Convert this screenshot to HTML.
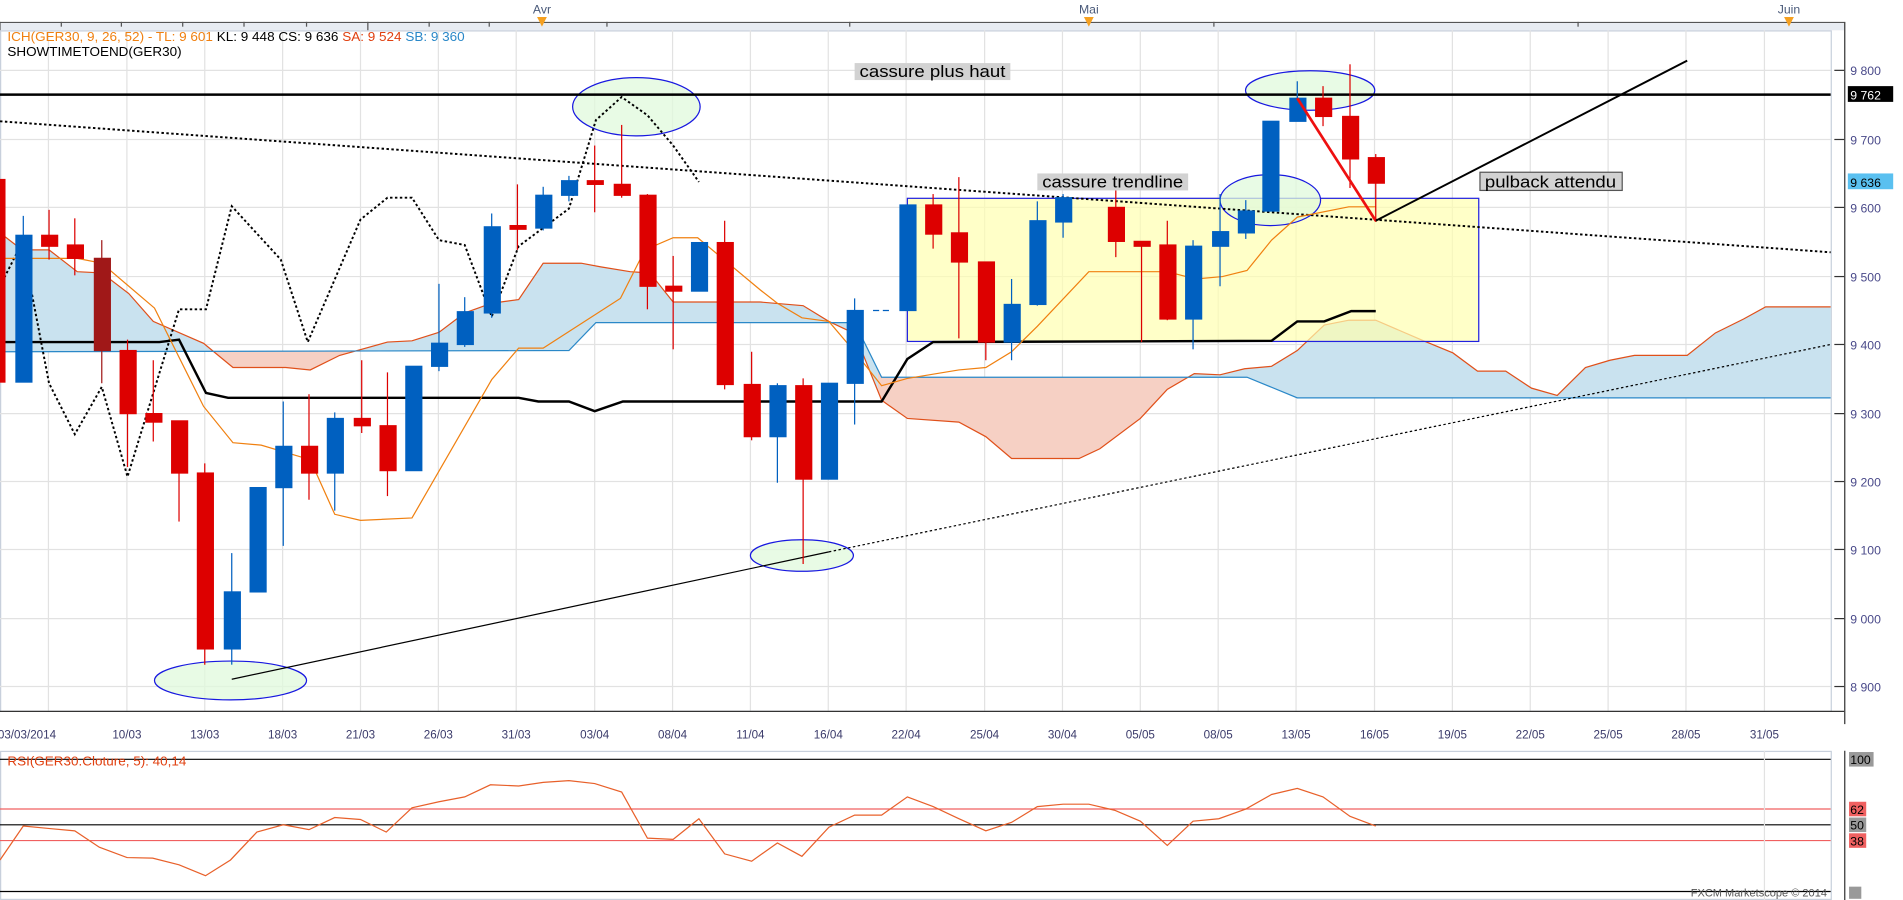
<!DOCTYPE html>
<html><head><meta charset="utf-8"><style>
html,body{margin:0;padding:0;background:#fff;overflow:hidden}
svg{display:block}
text{font-family:"Liberation Sans","DejaVu Sans",sans-serif}
</style></head><body>
<svg width="1903" height="900" viewBox="0 0 1552 742" preserveAspectRatio="none" xmlns="http://www.w3.org/2000/svg">
<defs>
<clipPath id="cb1"><rect x="0" y="0" width="175" height="600"/><rect x="290" y="0" width="426" height="600"/><rect x="970" y="0" width="530" height="600"/></clipPath>
<clipPath id="cr1"><rect x="175" y="0" width="115" height="600"/><rect x="716" y="0" width="254" height="600"/></clipPath>
</defs>
<rect width="1552" height="742" fill="#fff"/>
<!-- top time axis -->
<rect x="0" y="19" width="1504" height="6" fill="#e8ecf2"/>
<line x1="0" y1="18.5" x2="1504" y2="18.5" stroke="#555"/>
<g stroke="#555">
<line x1="0" y1="18" x2="0" y2="25"/><line x1="50" y1="18" x2="50" y2="22"/><line x1="99" y1="18" x2="99" y2="22"/><line x1="149" y1="18" x2="149" y2="22"/><line x1="199" y1="18" x2="199" y2="22"/><line x1="250" y1="18" x2="250" y2="22"/><line x1="300" y1="18" x2="300" y2="25"/><line x1="350" y1="18" x2="350" y2="22"/><line x1="399" y1="18" x2="399" y2="22"/><line x1="495" y1="18" x2="495" y2="22"/><line x1="693" y1="18" x2="693" y2="22"/><line x1="990" y1="18" x2="990" y2="22"/><line x1="1287" y1="18" x2="1287" y2="22"/>
</g>
<text x="442" y="11" font-size="10" fill="#4a5a7a" text-anchor="middle">Avr</text>
<text x="888" y="11" font-size="10" fill="#4a5a7a" text-anchor="middle">Mai</text>
<text x="1459" y="11" font-size="10" fill="#4a5a7a" text-anchor="middle">Juin</text>
<path d="M438 14h8l-4 8z M884 14h8l-4 8z M1455 14h8l-4 8z" fill="#f5a020"/>
<!-- chart frame -->
<rect x="0.5" y="25.5" width="1493" height="561" fill="#fff" stroke="#c8d0dc"/>
<!-- grid -->
<g stroke="#e2e2e2" stroke-width="1">
<line x1="0" y1="58" x2="1493" y2="58"/><line x1="0" y1="115" x2="1493" y2="115"/><line x1="0" y1="171" x2="1493" y2="171"/><line x1="0" y1="228" x2="1493" y2="228"/><line x1="0" y1="284" x2="1493" y2="284"/><line x1="0" y1="341" x2="1493" y2="341"/><line x1="0" y1="397" x2="1493" y2="397"/><line x1="0" y1="453" x2="1493" y2="453"/><line x1="0" y1="510" x2="1493" y2="510"/><line x1="0" y1="566" x2="1493" y2="566"/>
<line x1="39.5" y1="25" x2="39.5" y2="586"/><line x1="103.5" y1="25" x2="103.5" y2="586"/><line x1="167" y1="25" x2="167" y2="586"/><line x1="230.5" y1="25" x2="230.5" y2="586"/><line x1="294" y1="25" x2="294" y2="586"/><line x1="357.5" y1="25" x2="357.5" y2="586"/><line x1="421" y1="25" x2="421" y2="586"/><line x1="485" y1="25" x2="485" y2="586"/><line x1="548.5" y1="25" x2="548.5" y2="586"/><line x1="612" y1="25" x2="612" y2="586"/><line x1="675.5" y1="25" x2="675.5" y2="586"/><line x1="739" y1="25" x2="739" y2="586"/><line x1="803" y1="25" x2="803" y2="586"/><line x1="866.5" y1="25" x2="866.5" y2="586"/><line x1="930" y1="25" x2="930" y2="586"/><line x1="993.5" y1="25" x2="993.5" y2="586"/><line x1="1057" y1="25" x2="1057" y2="586"/><line x1="1121" y1="25" x2="1121" y2="586"/><line x1="1184.5" y1="25" x2="1184.5" y2="586"/><line x1="1248" y1="25" x2="1248" y2="586"/><line x1="1311.5" y1="25" x2="1311.5" y2="586"/><line x1="1375" y1="25" x2="1375" y2="586"/><line x1="1439" y1="25" x2="1439" y2="586"/>
</g>
<!-- cloud -->
<polygon clip-path="url(#cb1)" fill="#c9e2ef" points="0,192 18,206 40,206 63,224 83,225 105,242 125,265 166,283 190,303 233,303 253,305 277,293 316,282 336,281 358,274 379,258 401,250 423,247 443,217 474,217 490,220 514,224 530,225 549,249 620,249 655,252 676,265 697,275 719,330 740,345 782,348 804,360 825,378 880,378 897,370 930,345 952,321 974,308 995,309 1015,304 1037,302 1058,289 1080,268 1100,264 1122,264 1161,281 1185,291 1205,306 1228,306 1249,320 1270,326 1293,303 1313,297 1333,293 1376,293 1399,274.5 1422,263 1440,253 1493,253 1493,328 1058,328 1017,311 719,311 697,266 486,266 464,289 0,290"/>
<polygon clip-path="url(#cr1)" fill="#f6d0c4" points="0,192 18,206 40,206 63,224 83,225 105,242 125,265 166,283 190,303 233,303 253,305 277,293 316,282 336,281 358,274 379,258 401,250 423,247 443,217 474,217 490,220 514,224 530,225 549,249 620,249 655,252 676,265 697,275 719,330 740,345 782,348 804,360 825,378 880,378 897,370 930,345 952,321 974,308 995,309 1015,304 1037,302 1058,289 1080,268 1100,264 1122,264 1161,281 1185,291 1205,306 1228,306 1249,320 1270,326 1293,303 1313,297 1333,293 1376,293 1399,274.5 1422,263 1440,253 1493,253 1493,328 1058,328 1017,311 719,311 697,266 486,266 464,289 0,290"/>
<polyline fill="none" stroke="#e0501a" stroke-width="1" points="0,192 18,206 40,206 63,224 83,225 105,242 125,265 166,283 190,303 233,303 253,305 277,293 316,282 336,281 358,274 379,258 401,250 423,247 443,217 474,217 490,220 514,224 530,225 549,249 620,249 655,252 676,265 697,275 719,330 740,345 782,348 804,360 825,378 880,378 897,370 930,345 952,321 974,308 995,309 1015,304 1037,302 1058,289 1080,268 1100,264 1122,264 1161,281 1185,291 1205,306 1228,306 1249,320 1270,326 1293,303 1313,297 1333,293 1376,293 1399,274.5 1422,263 1440,253 1493,253"/>
<polyline fill="none" stroke="#2a88c8" stroke-width="1" points="0,290 464,289 486,266 697,266 719,311 1017,311 1058,328 1493,328"/>
<!-- yellow box -->
<rect x="740" y="163.5" width="466" height="118" fill="#ffffb0" fill-opacity="0.7" stroke="#2020e0" stroke-width="1"/>
<!-- ellipses -->
<g fill="#e0fadc" fill-opacity="0.75" stroke="#1818e0" stroke-width="1">
<ellipse cx="519" cy="88" rx="52" ry="24"/>
<ellipse cx="1068.5" cy="74.6" rx="52.7" ry="16.3"/>
<ellipse cx="1036" cy="165" rx="41" ry="21"/>
<ellipse cx="654" cy="458" rx="42" ry="13"/>
<ellipse cx="188" cy="561" rx="62" ry="16"/>
</g>
<line x1="0" y1="78" x2="1493" y2="78" stroke="#000" stroke-width="2"/>
<line x1="0" y1="100" x2="1493" y2="208" stroke="#000" stroke-width="1.6" stroke-dasharray="2,2"/>
<line x1="189" y1="560" x2="676" y2="455" stroke="#000" stroke-width="1"/>
<line x1="676" y1="455" x2="1493" y2="284" stroke="#000" stroke-width="1" stroke-dasharray="2,2"/>
<polyline fill="none" stroke="#000" stroke-width="1.6" stroke-dasharray="2,2" points="0,236 18,200 40,316 61,358 83,319 104,393 146,255 168,255 189,170 229,214 251,282 294,181 316,163 336,163 358,198 379,202 401,261 423,203 464,172 486,99 507,80 528,95 549,120 570,150"/>
<polyline fill="none" stroke="#000" stroke-width="2" points="0,282 130,282 146,280 168,324 186,328 423,328 439,331 464,331 485,339 508,331 719,331 740,296 761,282 1037,281 1058,265 1080,265 1102,256.5 1122,256.5"/>
<polyline fill="none" stroke="#f08010" stroke-width="1" points="0,213 63,213 83,217 126,254 166,335 190,365 213,367 253,379 273,424 294,429 336,427 401,313 423,287 443,287 506,246 526,206 549,196 569,196 620,239 634,250 654,262 676,265 697,290 719,318 740,312 782,305 804,303 825,290 846,269 888,224 952,224 975,230 997,228 1017,223 1037,198 1058,179 1100,170.5 1122,170.5"/>
<!-- candles -->
<g stroke-width="1">
<g stroke="#dd0000" fill="#dd0000">
<line x1="-2" y1="140" x2="-2" y2="318"/><rect x="-8" y="148" width="12" height="167"/>
<line x1="40" y1="173" x2="40" y2="214"/><rect x="34" y="194" width="13" height="9"/>
<line x1="61" y1="180" x2="61" y2="227"/><rect x="55" y="202" width="13" height="11"/>
<line x1="104" y1="280" x2="104" y2="385"/><rect x="98" y="289" width="13" height="52"/>
<line x1="125" y1="297" x2="125" y2="364"/><rect x="119" y="341" width="13" height="7"/>
<line x1="146" y1="347" x2="146" y2="430"/><rect x="140" y="347" width="13" height="43"/>
<line x1="167" y1="382" x2="167" y2="548"/><rect x="161" y="390" width="13" height="145"/>
<line x1="252" y1="325" x2="252" y2="412"/><rect x="246" y="368" width="13" height="22"/>
<line x1="295" y1="297" x2="295" y2="357"/><rect x="289" y="345" width="13" height="6"/>
<line x1="316" y1="307" x2="316" y2="409"/><rect x="310" y="351" width="13" height="37"/>
<line x1="422" y1="152" x2="422" y2="206"/><rect x="416" y="186" width="13" height="3"/>
<line x1="485" y1="120" x2="485" y2="175"/><rect x="479" y="149" width="13" height="3"/>
<line x1="507" y1="103" x2="507" y2="163"/><rect x="501" y="152" width="13" height="9"/>
<line x1="528" y1="160" x2="528" y2="255"/><rect x="522" y="161" width="13" height="75"/>
<line x1="549" y1="211" x2="549" y2="288"/><rect x="543" y="236" width="13" height="4"/>
<line x1="591" y1="182" x2="591" y2="321"/><rect x="585" y="200" width="13" height="117"/>
<line x1="613" y1="290" x2="613" y2="363"/><rect x="607" y="317" width="13" height="43"/>
<line x1="655" y1="312" x2="655" y2="465"/><rect x="649" y="318" width="13" height="77"/>
<line x1="761" y1="160" x2="761" y2="205"/><rect x="755" y="169" width="13" height="24"/>
<line x1="782" y1="146" x2="782" y2="279"/><rect x="776" y="192" width="13" height="24"/>
<line x1="804" y1="216" x2="804" y2="297"/><rect x="798" y="216" width="13" height="66"/>
<line x1="910" y1="157" x2="910" y2="212"/><rect x="904" y="171" width="13" height="28"/>
<line x1="931" y1="199" x2="931" y2="282"/><rect x="925" y="199" width="13" height="4"/>
<line x1="952" y1="182" x2="952" y2="264"/><rect x="946" y="202" width="13" height="61"/>
<line x1="1079" y1="71" x2="1079" y2="104"/><rect x="1073" y="81" width="13" height="15"/>
<line x1="1101" y1="53" x2="1101" y2="155"/><rect x="1095" y="96" width="13" height="35"/>
<line x1="1122" y1="127" x2="1122" y2="183"/><rect x="1116" y="130" width="13" height="21"/>
</g>
<g stroke="#a01818" fill="#a01818"><line x1="83" y1="198" x2="83" y2="316"/><rect x="77" y="213" width="13" height="76"/></g>
<g stroke="#0060c0" fill="#0060c0">
<line x1="19" y1="178" x2="19" y2="315"/><rect x="13" y="194" width="13" height="121"/>
<line x1="189" y1="456" x2="189" y2="548"/><rect x="183" y="488" width="13" height="47"/>
<rect x="204" y="402" width="13" height="86"/>
<line x1="231" y1="331" x2="231" y2="450"/><rect x="225" y="368" width="13" height="34"/>
<line x1="273" y1="340" x2="273" y2="421"/><rect x="267" y="345" width="13" height="45"/>
<rect x="331" y="302" width="13" height="86"/>
<line x1="358" y1="234" x2="358" y2="306"/><rect x="352" y="283" width="13" height="19"/>
<line x1="379" y1="245" x2="379" y2="286"/><rect x="373" y="257" width="13" height="27"/>
<line x1="401" y1="176" x2="401" y2="262"/><rect x="395" y="187" width="13" height="71"/>
<line x1="443" y1="154" x2="443" y2="190"/><rect x="437" y="161" width="13" height="27"/>
<line x1="464" y1="145" x2="464" y2="166"/><rect x="458" y="149" width="13" height="12"/>
<rect x="564" y="200" width="13" height="40"/>
<line x1="634" y1="316" x2="634" y2="398"/><rect x="628" y="318" width="13" height="42"/>
<rect x="670" y="316" width="13" height="79"/>
<line x1="697" y1="246" x2="697" y2="350"/><rect x="691" y="256" width="13" height="60"/>
<line x1="712" y1="256" x2="726" y2="256" stroke-dasharray="5,3"/>
<rect x="734" y="169" width="13" height="87"/>
<line x1="825" y1="230" x2="825" y2="297"/><rect x="819" y="251" width="13" height="31"/>
<line x1="846" y1="166" x2="846" y2="252"/><rect x="840" y="182" width="13" height="69"/>
<line x1="867" y1="160" x2="867" y2="196"/><rect x="861" y="163" width="13" height="20"/>
<line x1="973" y1="198" x2="973" y2="288"/><rect x="967" y="203" width="13" height="60"/>
<line x1="995" y1="160" x2="995" y2="236"/><rect x="989" y="191" width="13" height="12"/>
<line x1="1016" y1="165" x2="1016" y2="197"/><rect x="1010" y="174" width="13" height="18"/>
<rect x="1030" y="100" width="13" height="74"/>
<line x1="1058" y1="67" x2="1058" y2="100"/><rect x="1052" y="81" width="13" height="19"/>
</g>
</g>
<line x1="1058" y1="81" x2="1122" y2="182" stroke="#ee1010" stroke-width="2.2"/>
<line x1="1122" y1="182" x2="1376" y2="50" stroke="#000" stroke-width="1.6"/>
<!-- labels -->
<g font-size="14" fill="#000">
<rect x="697" y="52" width="127" height="14" fill="#d2d2d2"/><text x="701" y="63.5" textLength="119" lengthAdjust="spacingAndGlyphs">cassure plus haut</text>
<rect x="846" y="143" width="123" height="14" fill="#d2d2d2"/><text x="850" y="154.5" textLength="115" lengthAdjust="spacingAndGlyphs">cassure trendline</text>
<rect x="1207" y="142" width="116" height="15" fill="#d2d2d2" stroke="#555"/><text x="1211" y="154.5" textLength="107" lengthAdjust="spacingAndGlyphs">pulback attendu</text>
</g>
<text x="6" y="34" font-size="11" textLength="373" lengthAdjust="spacingAndGlyphs"><tspan fill="#f08010">ICH(GER30, 9, 26, 52) -  TL: 9 601 </tspan><tspan fill="#000"> KL: 9 448  CS: 9 636 </tspan><tspan fill="#e04010"> SA: 9 524 </tspan><tspan fill="#2a88c8"> SB: 9 360</tspan></text>
<text x="6" y="46" font-size="11" fill="#000">SHOWTIMETOEND(GER30)</text>
<!-- right axis -->
<line x1="1504.5" y1="18" x2="1504.5" y2="597" stroke="#333"/>
<g stroke="#333">
<line x1="1496" y1="58" x2="1504" y2="58"/><line x1="1496" y1="115" x2="1504" y2="115"/><line x1="1496" y1="171" x2="1504" y2="171"/><line x1="1496" y1="228" x2="1504" y2="228"/><line x1="1496" y1="284" x2="1504" y2="284"/><line x1="1496" y1="341" x2="1504" y2="341"/><line x1="1496" y1="397" x2="1504" y2="397"/><line x1="1496" y1="453" x2="1504" y2="453"/><line x1="1496" y1="510" x2="1504" y2="510"/><line x1="1496" y1="566" x2="1504" y2="566"/>
</g>
<g font-size="10" fill="#4a4a8a">
<text x="1509" y="62">9 800</text><text x="1509" y="119">9 700</text><text x="1509" y="175">9 600</text><text x="1509" y="232">9 500</text><text x="1509" y="288">9 400</text><text x="1509" y="345">9 300</text><text x="1509" y="401">9 200</text><text x="1509" y="457">9 100</text><text x="1509" y="514">9 000</text><text x="1509" y="570">8 900</text>
</g>
<rect x="1507" y="71" width="37" height="13" fill="#000"/><text x="1509" y="82" font-size="10" fill="#fff">9 762</text>
<rect x="1507" y="143" width="37" height="13" fill="#5ac0f0"/><text x="1509" y="154" font-size="10" fill="#000">9 636</text>
<!-- bottom date axis -->
<line x1="0" y1="586.5" x2="1504" y2="586.5" stroke="#333"/>
<g font-size="9.5" fill="#3a3a6a" text-anchor="middle">
<text x="22" y="609">03/03/2014</text><text x="103.5" y="609">10/03</text><text x="167" y="609">13/03</text><text x="230.5" y="609">18/03</text><text x="294" y="609">21/03</text><text x="357.5" y="609">26/03</text><text x="421" y="609">31/03</text><text x="485" y="609">03/04</text><text x="548.5" y="609">08/04</text><text x="612" y="609">11/04</text><text x="675.5" y="609">16/04</text><text x="739" y="609">22/04</text><text x="803" y="609">25/04</text><text x="866.5" y="609">30/04</text><text x="930" y="609">05/05</text><text x="993.5" y="609">08/05</text><text x="1057" y="609">13/05</text><text x="1121" y="609">16/05</text><text x="1184.5" y="609">19/05</text><text x="1248" y="609">22/05</text><text x="1311.5" y="609">25/05</text><text x="1375" y="609">28/05</text><text x="1439" y="609">31/05</text>
</g>
<!-- RSI panel -->
<rect x="0.5" y="619.5" width="1493" height="122" fill="#fff" stroke="#c8d0dc"/>
<line x1="0" y1="626" x2="1493" y2="626" stroke="#000"/>
<line x1="0" y1="667" x2="1493" y2="667" stroke="#f06060"/>
<line x1="0" y1="680" x2="1493" y2="680" stroke="#000"/>
<line x1="0" y1="693" x2="1493" y2="693" stroke="#f06060"/>
<line x1="0" y1="735" x2="1493" y2="735" stroke="#000"/>
<line x1="1439" y1="619" x2="1439" y2="742" stroke="#e2e2e2"/>
<text x="6" y="631" font-size="11" fill="#e04010">RSI(GER30.Cloture, 5): 40,14</text>
<polyline fill="none" stroke="#e8602a" stroke-width="1" points="0,709 19,681 39.5,683 61,685 81,698.5 103.6,707 124.5,707.5 146,713 167.6,722 188,709 209.5,686 231,680 252,684 273,674 294,675.6 315,686 336,666 358,661 379,657 400,647 423,648 443,645 464,643.6 485,646 507,653 528,691 549,692 570,675 591,704 613,710 634,695 654,706 676,682 697,672 719,672 740,657 761,665 782,675 804,685 825,678 846,665 867,663 888,663 909,668 930,677 952,697 973,677 994,675 1016,667 1037,655 1058,650 1079,657 1101,673 1122,681"/>
<line x1="1504.5" y1="619" x2="1504.5" y2="742" stroke="#333"/>
<rect x="1508" y="620" width="20" height="12" fill="#999"/><text x="1509" y="630" font-size="10" fill="#000">100</text>
<rect x="1508" y="661" width="14" height="12" fill="#f06060"/><text x="1509" y="671" font-size="10" fill="#000">62</text>
<rect x="1508" y="674" width="14" height="12" fill="#999"/><text x="1509" y="684" font-size="10" fill="#000">50</text>
<rect x="1508" y="687" width="14" height="12" fill="#f06060"/><text x="1509" y="697" font-size="10" fill="#000">38</text>
<rect x="1508" y="731" width="10" height="10" fill="#999"/>
<text x="1490" y="739" font-size="9" fill="#555" text-anchor="end">FXCM Marketscope © 2014</text>
</svg>
</body></html>
